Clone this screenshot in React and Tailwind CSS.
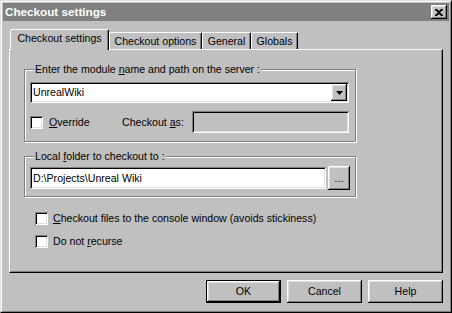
import React from "react";

const raised =
  "shadow-[inset_-1px_-1px_0_#000,inset_1px_1px_0_#fff,inset_-2px_-2px_0_#808080,inset_2px_2px_0_#dfdfdf]";
const sunken =
  "shadow-[inset_1px_1px_0_#808080,inset_-1px_-1px_0_#fff,inset_2px_2px_0_#000,inset_-2px_-2px_0_#dfdfdf]";

function CheckBox() {
  return <span className={`block w-[13px] h-[13px] shrink-0 bg-white ${sunken}`} />;
}

function Tab({ label, active, width }) {
  return (
    <div
      className={`flex items-center justify-center bg-[#c0c0c0] border-t border-l border-r border-t-white border-l-white border-r-black rounded-t-[2px] shadow-[inset_-1px_0_0_#808080] ${
        active ? "relative z-10 h-[21px] -mb-px pb-[3px]" : "h-[17px]"
      }`}
      style={{ width }}
    >
      {label}
    </div>
  );
}

function Group({ label, className, children }) {
  return (
    <div
      className={`relative border border-[#808080] shadow-[1px_1px_0_#fff,inset_1px_1px_0_#fff] ${className}`}
    >
      <span className="absolute -top-[8px] left-[9px] bg-[#c0c0c0] px-px leading-[14px]">
        {label}
      </span>
      {children}
    </div>
  );
}

function Button({ children, isDefault }) {
  return (
    <button
      className={`w-[75px] h-[23px] bg-[#c0c0c0] ${
        isDefault ? "border border-black " : ""
      }${raised} flex items-center justify-center`}
    >
      {children}
    </button>
  );
}

export default function App() {
  return (
    <div className="w-[452px] h-[313px] bg-[#c0c0c0] border border-t-[#dfdfdf] border-l-[#dfdfdf] border-r-black border-b-black font-['Liberation_Sans',Arial,sans-serif] text-[10.6px] text-black leading-none">
      <div className="h-full border border-t-white border-l-white border-r-[#808080] border-b-[#808080] p-px flex flex-col">
        {/* title bar */}
        <div className="h-[18px] bg-[#808080] flex items-center justify-between pl-[2px] pr-[2px]">
          <span className="text-white font-bold text-[11.7px]">Checkout settings</span>
          <div className={`w-[16px] h-[14px] bg-[#c0c0c0] flex items-center justify-center ${raised}`}>
            <svg width="8" height="7" viewBox="0 0 8 7">
              <path d="M0 0h2l2 2 2-2h2v1L5 3.5 8 6v1H6L4 5 2 7H0V6l3-2.5L0 1z" fill="#000" />
            </svg>
          </div>
        </div>

        <div className="flex-1 pt-[8px]">
          <div className="flex items-end h-[20px] ml-[7px]">
            <Tab label="Checkout settings" active width={99} />
            <Tab label="Checkout options" width={93} />
            <Tab label="General" width={49} />
            <Tab label="Globals" width={47} />
          </div>

          <div className="ml-[6px] w-[434px]">
            <div className="h-[224px] border border-t-white border-l-white border-r-black border-b-black shadow-[inset_-1px_-1px_0_#808080] pl-[14px] pt-[19px]">
              <Group
                className="w-[332px] h-[73px] pl-[5px] pt-[12px]"
                label={
                  <>
                    Enter the module <u>n</u>ame and path on the server :
                  </>
                }
              >
                <div className={`w-[319px] h-[21px] bg-white p-[2px] flex ${sunken}`}>
                  <div className="flex-1 flex items-center pl-px">UnrealWiki</div>
                  <div className={`w-[16px] h-full bg-[#c0c0c0] flex items-center justify-center ${raised}`}>
                    <svg width="7" height="4" viewBox="0 0 7 4">
                      <path d="M0 0h7L3.5 4z" fill="#000" />
                    </svg>
                  </div>
                </div>
                <div className="flex items-center h-[22px] mt-[8px]">
                  <CheckBox />
                  <span className="ml-[6px] w-[73px]">
                    <u>O</u>verride
                  </span>
                  <span className="w-[70px]">
                    Checkout <u>a</u>s:
                  </span>
                  <div className={`w-[157px] h-[22px] bg-[#c0c0c0] ${sunken}`} />
                </div>
              </Group>

              <Group
                className="w-[332px] h-[41px] mt-[14px] pl-[5px] pt-[9px]"
                label={
                  <>
                    Local <u>f</u>older to checkout to :
                  </>
                }
              >
                <div className="flex items-center">
                  <div className={`w-[296px] h-[22px] bg-white flex items-center pl-[3px] ${sunken}`}>
                    D:\Projects\Unreal Wiki
                  </div>
                  <div className={`ml-[2px] w-[22px] h-[24px] flex items-center justify-center ${raised}`}>
                    ...
                  </div>
                </div>
              </Group>

              <div className="flex items-center h-[13px] mt-[15px] ml-[11px]">
                <CheckBox />
                <span className="ml-[5px]">
                  <u>C</u>heckout files to the console window (avoids stickiness)
                </span>
              </div>
              <div className="flex items-center h-[13px] mt-[10px] ml-[11px]">
                <CheckBox />
                <span className="ml-[5px]">
                  Do not <u>r</u>ecurse
                </span>
              </div>
            </div>

            <div className="flex justify-end gap-[6px] mt-[7px]">
              <Button isDefault>OK</Button>
              <Button>Cancel</Button>
              <Button>Help</Button>
            </div>
          </div>
        </div>
      </div>
    </div>
  );
}
